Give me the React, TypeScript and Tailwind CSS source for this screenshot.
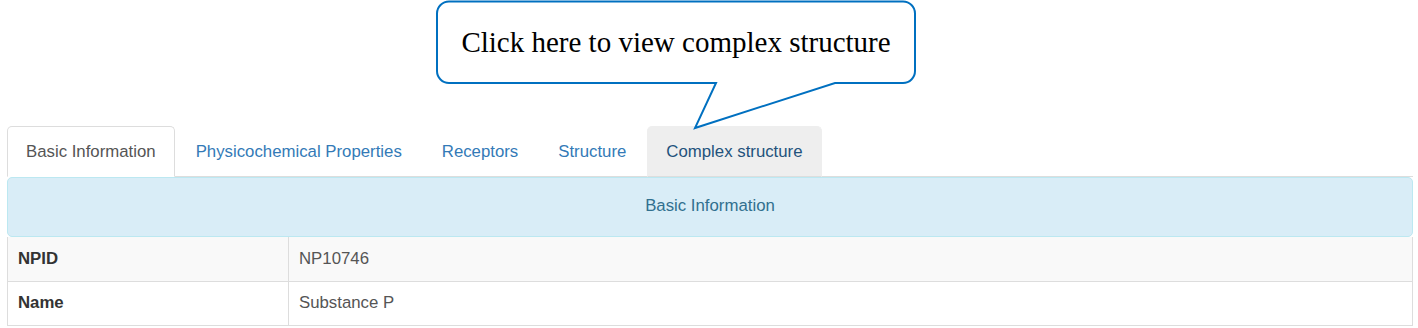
const tabs = [
  { label: "Basic Information", state: "active" },
  { label: "Physicochemical Properties", state: "" },
  { label: "Receptors", state: "" },
  { label: "Structure", state: "" },
  { label: "Complex structure", state: "hover" },
];

const rows = [
  { key: "NPID", value: "NP10746" },
  { key: "Name", value: "Substance P" },
];

function Callout() {
  return (
    <div className="absolute left-0 top-0 w-[1418px] h-[132px] pointer-events-none">
      <svg width="1418" height="132" className="absolute left-0 top-0">
        <path
          d="M449 1.5 H903 A12 12 0 0 1 915 13.5 V71 A12 12 0 0 1 903 83 H835 L695 128 L716 83 H449 A12 12 0 0 1 437 71 V13.5 A12 12 0 0 1 449 1.5 Z"
          fill="#ffffff"
          stroke="#0070c0"
          strokeWidth="2"
          strokeLinejoin="miter"
        />
      </svg>
      <div className="absolute left-[437px] top-[1px] w-[478px] h-[82px] flex items-center justify-center font-['Liberation_Serif','Times_New_Roman',serif] text-[29px] text-black leading-none">
        Click here to view complex structure
      </div>
    </div>
  );
}

export default function App() {
  return (
    <div className="relative w-[1418px] h-[328px] bg-white overflow-hidden font-['Liberation_Sans',Arial,sans-serif] text-[16.8px]">
      <div className="pt-[126px] ml-[7px] w-[1406px]">
        {/* tabs */}
        <ul className="flex h-[51px] border-b border-[#ddd]">
          {tabs.map((t) => (
            <li key={t.label} className="-mb-px mr-[2px]">
              {t.state === "active" ? (
                <a className="flex items-center h-[51px] px-[18px] border border-[#ddd] border-b-white rounded-t-[5px] bg-white text-[#555]">
                  {t.label}
                </a>
              ) : t.state === "hover" ? (
                <a className="flex items-center h-[51px] px-[18px] border border-[#eee] border-b-[#ddd] rounded-t-[5px] bg-[#eee] text-[#23527c]">
                  {t.label}
                </a>
              ) : (
                <a className="flex items-center h-[51px] px-[18px] border border-transparent rounded-t-[5px] text-[#337ab7]">
                  {t.label}
                </a>
              )}
            </li>
          ))}
        </ul>

        {/* panel heading */}
        <div className="h-[60px] flex items-center justify-center pb-[3px] bg-[#d9edf7] border border-[#bce8f1] rounded-[5px] text-[#31708f]">
          Basic Information
        </div>

        {/* table */}
        <div className="border-l border-r border-[#ddd]">
          {rows.map((r, i) => (
            <div
              key={r.key}
              className={
                i === 0
                  ? "grid grid-cols-[281px_1fr] h-[45px] border-b border-[#ddd] bg-[#f9f9f9]"
                  : "grid grid-cols-[281px_1fr] h-[44px] border-b border-[#ddd] bg-white"
              }
            >
              <div className="flex items-center pl-[10px] pb-[1px] border-r border-[#ddd] font-bold text-[#333]">
                {r.key}
              </div>
              <div className="flex items-center pl-[10px] pb-[1px] text-[#555]">{r.value}</div>
            </div>
          ))}
        </div>
      </div>
      <Callout />
    </div>
  );
}
